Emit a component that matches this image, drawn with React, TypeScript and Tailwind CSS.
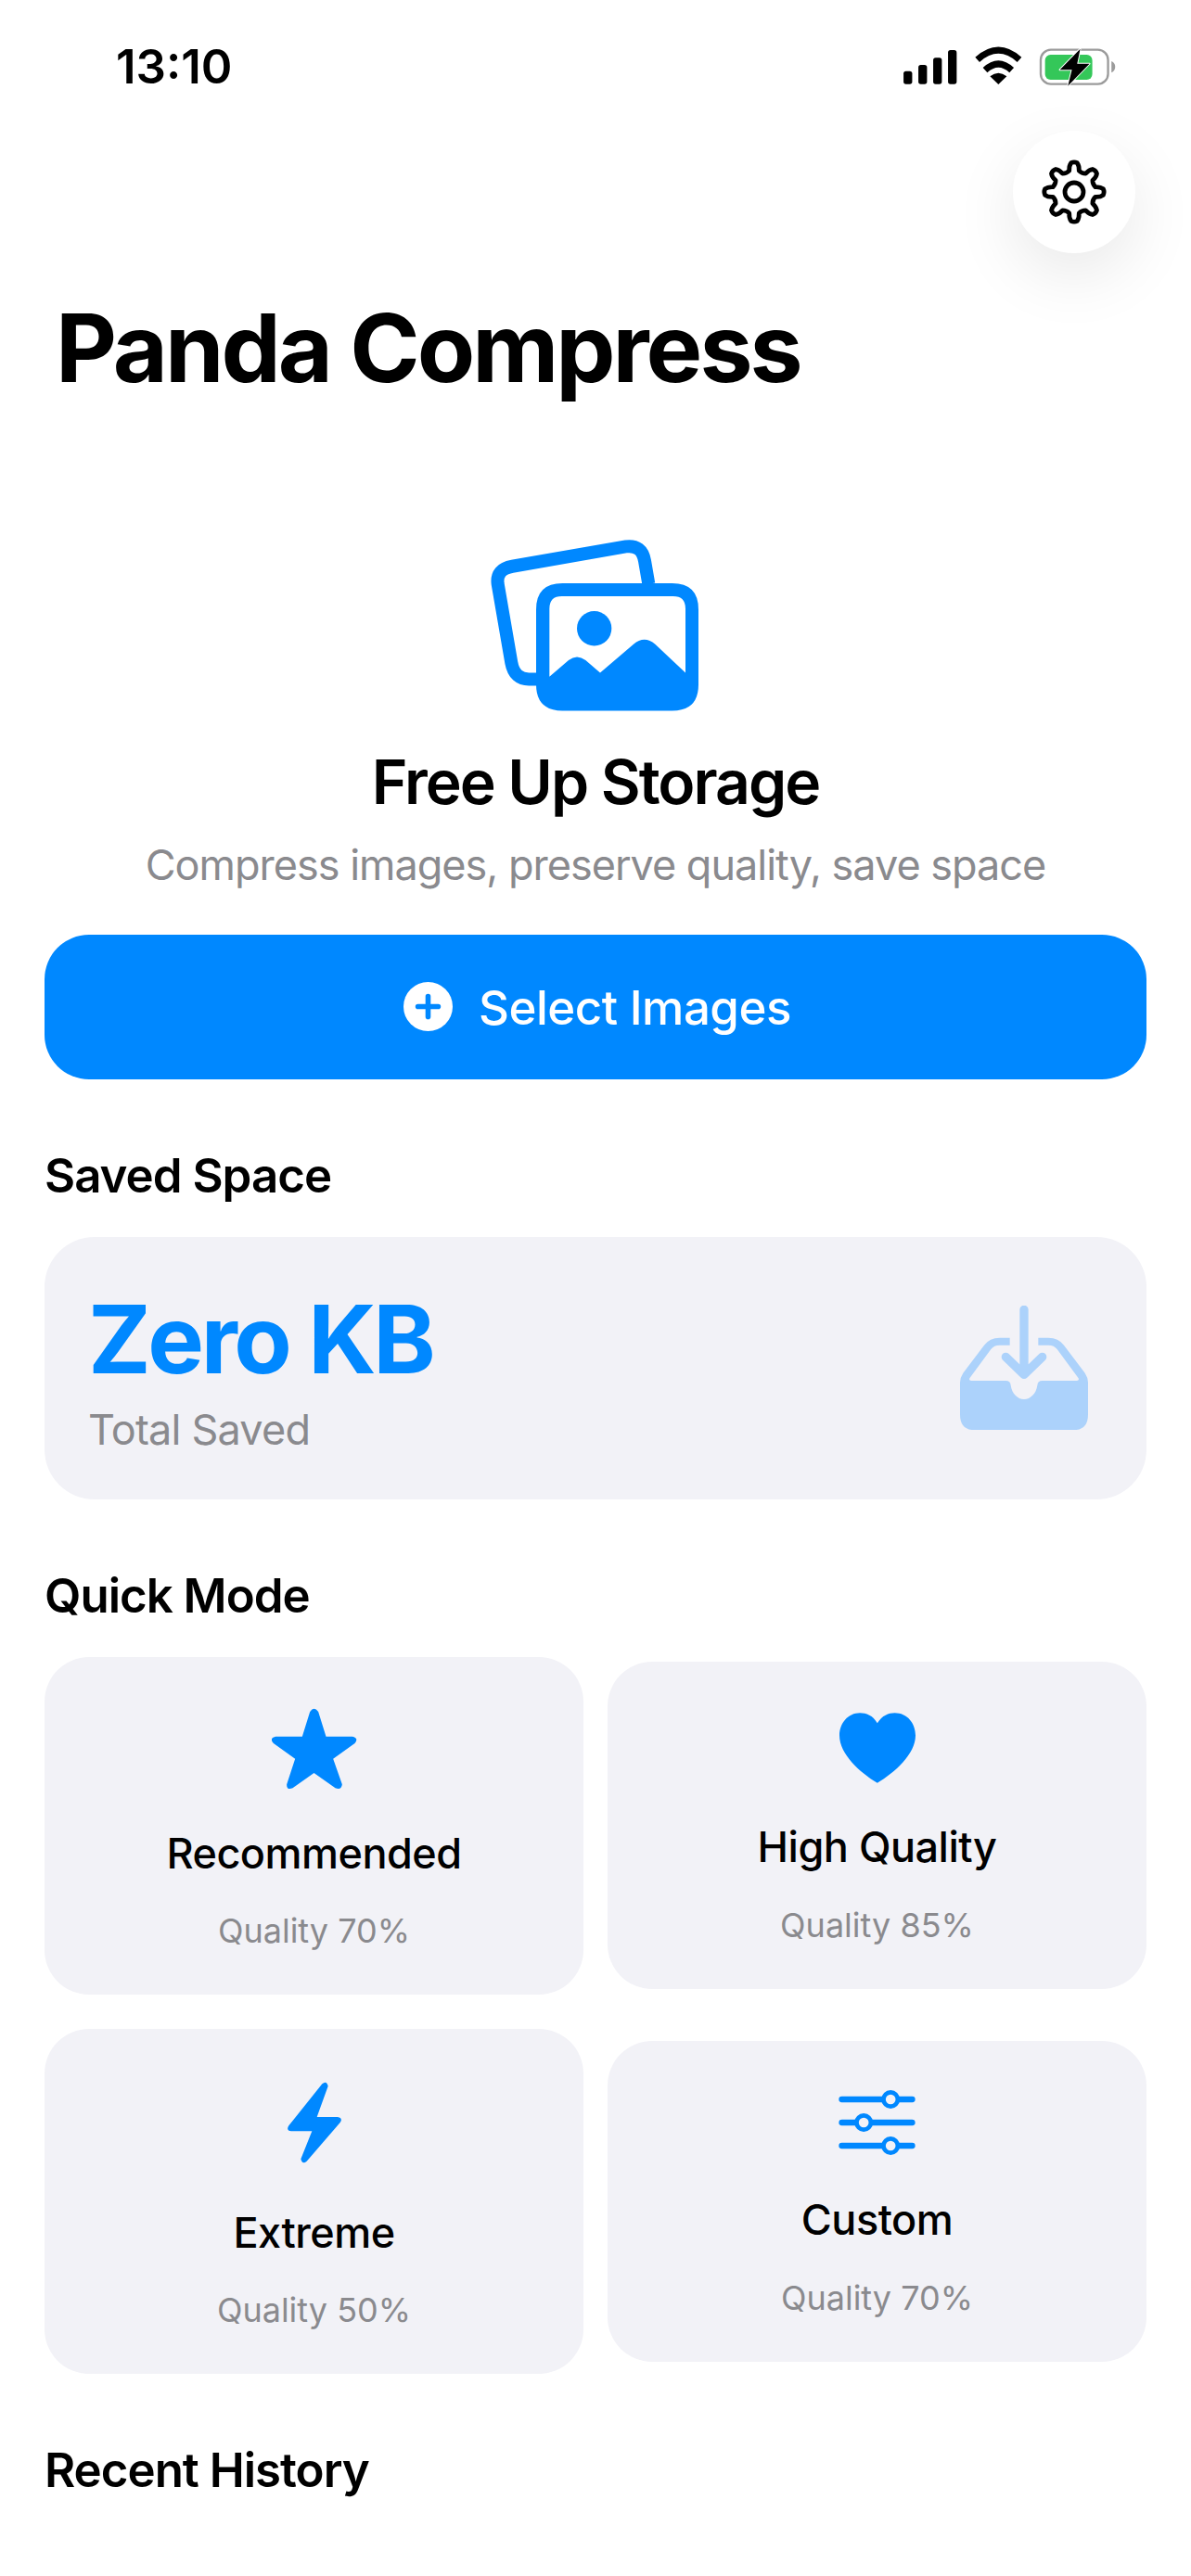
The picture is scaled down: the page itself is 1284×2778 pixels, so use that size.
import type { ReactNode } from "react";

const gearPath = () => {
  const cx = 36;
  const cy = 36;
  const rO = 31.5;
  const rI = 23.5;
  const parts: string[] = [];
  const pt = (r: number, deg: number) => {
    const a = (deg * Math.PI) / 180;
    return `${(cx + r * Math.sin(a)).toFixed(2)} ${(cy - r * Math.cos(a)).toFixed(2)}`;
  };
  for (let i = 0; i < 8; i++) {
    const c = i * 45;
    if (i === 0) parts.push(`M${pt(rI, c - 13)}`);
    parts.push(`Q${pt(rO * 0.92, c - 11)} ${pt(rO, c - 6)}`);
    parts.push(`Q${pt(rO + 1.5, c)} ${pt(rO, c + 6)}`);
    parts.push(`Q${pt(rO * 0.92, c + 11)} ${pt(rI, c + 13)}`);
    parts.push(`Q${pt(rI - 2, c + 22.5)} ${pt(rI, c + 32)}`);
  }
  return parts.join(" ") + "Z";
};

const StatusIcons = () => (
  <svg viewBox="220 60 690 130" width="230" height="43.3">
    <rect x="220" y="140" width="28" height="42" rx="8" fill="#000" />
    <rect x="268" y="120" width="28" height="62" rx="8" fill="#000" />
    <rect x="316" y="97" width="28" height="85" rx="8" fill="#000" />
    <rect x="364" y="72" width="28" height="110" rx="8" fill="#000" />
    <path d="M459 103Q527 42 595 103" fill="none" stroke="#000" strokeWidth="21" />
    <path d="M484 137Q527 97 570 137" fill="none" stroke="#000" strokeWidth="21" />
    <path d="M527 183L500 157Q527 135 554 157Z" fill="#000" />
    <rect x="664" y="71" width="218" height="111" rx="33" fill="none" stroke="#9b9b9b" strokeWidth="7" />
    <rect x="678" y="87" width="153" height="81" rx="18" fill="#34c759" />
    <path d="M893 108Q905 114 905 126Q905 139 893 145Z" fill="#9b9b9b" />
    <path
      d="M792 68L726 136L765 136L752 188L822 116L782 116Z"
      fill="#000"
      stroke="#fff"
      strokeWidth="6"
      strokeLinejoin="round"
      paintOrder="stroke"
    />
  </svg>
);

const PhotosIcon = () => (
  <svg viewBox="148 97 672 553" width="224" height="184.5" fill="#0088ff">
    <path
      d="M659 240L646 165Q637 112 585 119L218 183Q165 192 171 240L215 495Q225 550 275 548L297 548"
      fill="none"
      stroke="#0088ff"
      strokeWidth="42"
    />
    <path
      fillRule="evenodd"
      d="M380 238H735Q820 238 820 323V565Q820 650 735 650H380Q295 650 295 565V323Q295 238 380 238ZM338 540L400 487Q427 465 455 487L502 527L610 435Q645 405 680 435L778 527V320Q778 280 738 280H378Q338 280 338 320Z"
    />
    <circle cx="483" cy="384" r="56" />
  </svg>
);

const InboxIcon = () => (
  <svg viewBox="162 87 414 403" width="138" height="134.3" fill="#acd2fb">
    <path d="M369 100V310M310 253L369 310L428 253" fill="none" stroke="#acd2fb" strokeWidth="28" strokeLinecap="round" strokeLinejoin="round" />
    <path d="M162 335Q162 320 172 305L240 215Q258 191 290 191H323V215H290Q272 215 262 228L193 322Q190 330 198 330H310Q325 330 326 345C330 372 348 390 369 390C390 390 408 372 412 345Q413 330 428 330H540Q548 330 545 322L476 228Q466 215 448 215H415V191H448Q480 191 498 215L566 305Q576 320 576 335V440Q576 490 526 490H212Q162 490 162 440Z" />
  </svg>
);

const StarIcon = () => (
  <svg viewBox="40 33 275 264" width="92" height="88" fill="#0088ff">
    <path d="M163 45Q176 25 190 45L215 125L300 125Q322 130 308 147L238 197L267 280Q265 300 245 292L176 243L107 292Q87 300 88 280L115 197L45 147Q30 130 52 125L138 125Z" />
  </svg>
);

const HeartIcon = () => (
  <svg viewBox="42 37 245 226" width="82" height="76" fill="#0088ff">
    <path d="M164 70C180 45 200 37 220 37C260 37 287 70 287 110C287 170 220 230 164 263C108 230 42 170 42 110C42 70 70 37 108 37C128 37 150 45 164 70Z" />
  </svg>
);

const BoltIcon = () => (
  <svg viewBox="60 58 174 264" width="58" height="88" fill="#0088ff">
    <path d="M172 65Q186 52 191 72L155 172L222 172Q240 175 230 190L122 315Q108 328 103 308L139 218L72 218Q54 215 64 200Z" />
  </svg>
);

const SlidersIcon = () => (
  <svg viewBox="42 75 248 210" width="83" height="70" fill="none">
    <path d="M52 105H280M52 180H280M52 255H280" stroke="#0088ff" strokeWidth="19" strokeLinecap="round" />
    <circle cx="210" cy="105" r="23" fill="#f2f2f7" stroke="#0088ff" strokeWidth="14" />
    <circle cx="123" cy="180" r="23" fill="#f2f2f7" stroke="#0088ff" strokeWidth="14" />
    <circle cx="210" cy="255" r="23" fill="#f2f2f7" stroke="#0088ff" strokeWidth="14" />
  </svg>
);

type Mode = {
  name: string;
  quality: string;
  icon: ReactNode;
  card: string;
  label: string;
  sub: string;
};

const modes: Mode[] = [
  { name: "Recommended", quality: "Quality 70%", icon: <StarIcon />, card: "pt-[55px]", label: "mt-[39px]", sub: "mt-[29px]" },
  { name: "High Quality", quality: "Quality 85%", icon: <HeartIcon />, card: "pt-[55px]", label: "mt-[39px]", sub: "mt-[30px]" },
  { name: "Extreme", quality: "Quality 50%", icon: <BoltIcon />, card: "pt-[57px]", label: "mt-[45px]", sub: "mt-[29px]" },
  { name: "Custom", quality: "Quality 70%", icon: <SlidersIcon />, card: "pt-[53px]", label: "mt-[40px]", sub: "mt-[30px]" },
];

const SectionTitle = ({ children, className }: { children: ReactNode; className: string }) => (
  <h2 className={`text-[51px] leading-[64px] font-semibold tracking-[-1px] text-black ${className}`}>{children}</h2>
);

export default function App() {
  return (
    <div className="min-h-[2778px] overflow-hidden bg-white px-12 font-['Inter',sans-serif]">
      <div className="mt-[50px] flex h-[44px] items-center justify-between pl-[77px] pr-[32px]">
        <span className="text-[51px] leading-[44px] font-semibold text-black">13:10</span>
        <StatusIcons />
      </div>

      <div className="mt-[47px] flex justify-end pr-[12px]">
        <button className="flex h-[132px] w-[132px] items-center justify-center rounded-full bg-white shadow-[0_24px_70px_rgba(0,0,0,0.09)]">
          <svg viewBox="0 0 72 72" width="72" height="72" fill="none" stroke="#000" strokeWidth="4.8" strokeLinejoin="round">
            <path d={gearPath()} />
            <circle cx="36" cy="36" r="10" />
          </svg>
        </button>
      </div>

      <h1 className="mt-[42px] pl-3 text-[102px] leading-[120px] font-bold tracking-[-3px] text-black">Panda Compress</h1>

      <div className="mt-[147px] flex justify-center pr-[2px]">
        <PhotosIcon />
      </div>
      <p className="mt-[36px] text-center text-[66px] leading-[80px] font-semibold tracking-[-2px] text-black">Free Up Storage</p>
      <p className="mt-[22px] text-center text-[45px] leading-[56px] tracking-[-1px] text-[#8a8a8e]">Compress images, preserve quality, save space</p>

      <button className="mt-[47px] flex h-[156px] w-full items-center justify-center gap-[28px] rounded-[48px] bg-[#0088ff] pl-[4px] pt-[4px] text-[51px] font-medium tracking-[-0.5px] text-white">
        <svg viewBox="0 0 51 51" width="53" height="53" className="-mt-[4px]">
          <circle cx="25.5" cy="25.5" r="25.5" fill="#fff" />
          <path d="M25.5 15V36M15 25.5H36" stroke="#0088ff" strokeWidth="5.4" strokeLinecap="round" />
        </svg>
        Select Images
      </button>

      <SectionTitle className="mt-[72px]">Saved Space</SectionTitle>
      <div className="mt-[34px] flex h-[283px] items-center justify-between rounded-[54px] bg-[#f2f2f7] pl-[47px] pr-[63px]">
        <div className="pt-[8px]">
          <p className="text-[102px] leading-[116px] font-bold tracking-[-3.4px] text-[#0088ff]">Zero KB</p>
          <p className="mt-[10px] text-[45px] leading-[60px] tracking-[-0.8px] text-[#8a8a8e]">Total Saved</p>
        </div>
        <InboxIcon />
      </div>

      <SectionTitle className="mt-[72px]">Quick Mode</SectionTitle>
      <div className="mt-[34px] grid grid-cols-2 items-center gap-x-[26px] gap-y-[37px]">
        {modes.map((m) => (
          <div key={m.name} className={`flex flex-col items-center rounded-[48px] bg-[#f2f2f7] pb-[45px] ${m.card}`}>
            {m.icon}
            <p className={`text-[45px] leading-[60px] font-medium tracking-[-0.5px] text-black ${m.label}`}>{m.name}</p>
            <p className={`text-[36px] leading-[48px] text-[#8a8a8e] ${m.sub}`}>{m.quality}</p>
          </div>
        ))}
      </div>

      <SectionTitle className="mt-[72px]">Recent History</SectionTitle>
    </div>
  );
}
